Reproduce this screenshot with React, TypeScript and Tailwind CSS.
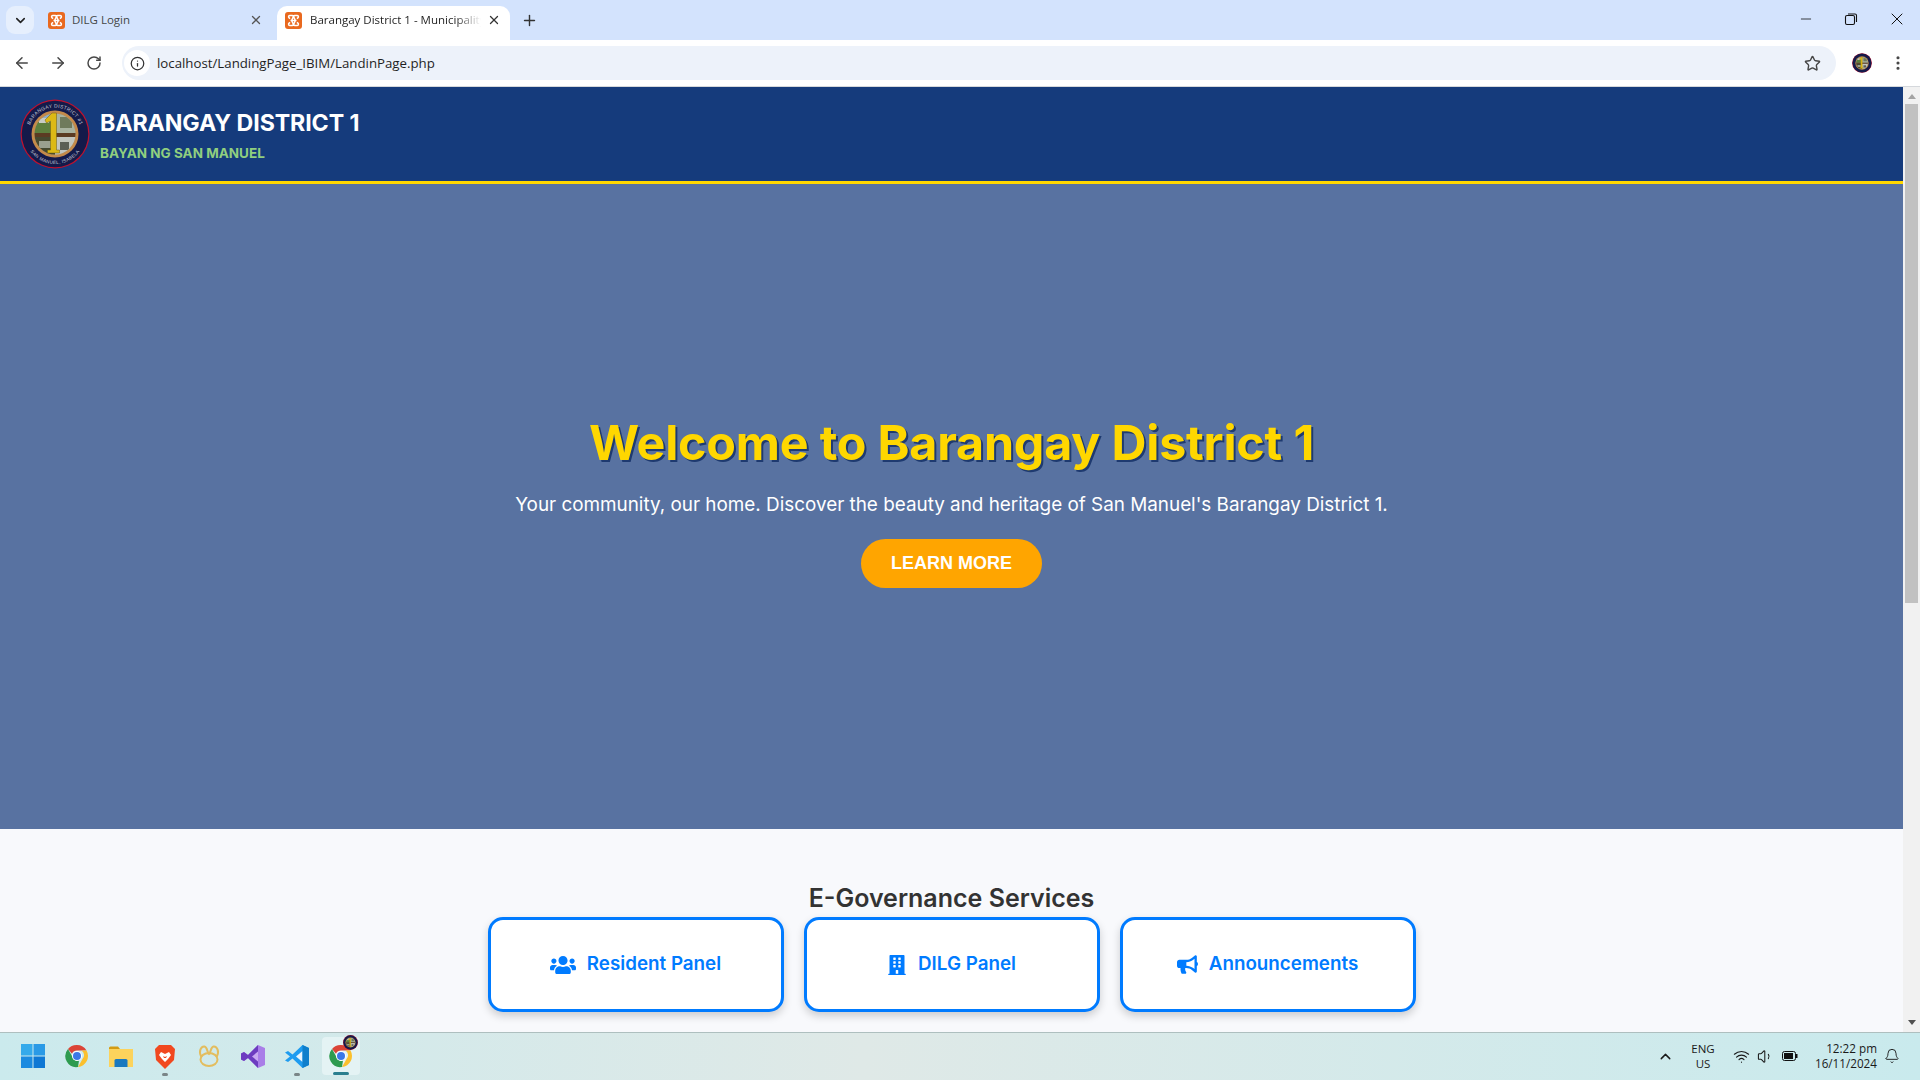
import React from "react";
import { ArrowLeft, ArrowRight, RotateCw, Info, Star, EllipsisVertical, ChevronDown, X, Plus, Minus, ChevronUp, Wifi, Volume1, Bell } from "lucide-react";
import { FaUsers, FaBuilding, FaBullhorn } from "react-icons/fa";

function Xampp() {
  return (
    <svg width="17" height="17" viewBox="0 0 17 17" className="shrink-0">
      <rect width="17" height="17" rx="3" fill="#e9691f" />
      <path d="M5 3.500h2.200c1 0 1.300 1 .9 1.800L6.600 8.500l1.500 3.200c.4.800.1 1.800-.9 1.800H5c-1.400 0-1.900-1.500-.9-2.300l1-.8M12 3.500H9.800c-1 0-1.300 1-.9 1.800l1.500 3.200-1.500 3.200c-.4.800-.1 1.800.9 1.800H12c1.400 0 1.900-1.500.9-2.300l-1-.8M5 3.500c-1.400 0-1.900 1.500-.9 2.300l1 .8M12 3.500c1.400 0 1.900 1.500.9 2.300l-1 .8M5.500 8.500h6" fill="none" stroke="#fff" strokeWidth="1.500" />
    </svg>
  );
}

function Crest({ size, text }: { size: number; text?: boolean }) {
  const clip = text ? "crestClipLarge" : size > 16 ? "crestClipMid" : "crestClipSmall";
  return (
    <svg width={size} height={size} viewBox="0 0 70 70" className="shrink-0">
      <circle cx="35" cy="35" r="34.500" fill="#c0112e" />
      <circle cx="35" cy="35" r="33.300" fill="#141a4a" />
      <defs>
        <clipPath id={clip}><circle cx="35" cy="35" r="20.500" /></clipPath>
        {text && <path id="crestTop" d="M9.400 41.900A26.500 26.500 0 1 1 60.600 41.900" />}
        {text && <path id="crestBot" d="M9 50A30 30 0 0 0 61 50" />}
      </defs>
      {text && (
        <>
          <text fill="#c8cbd8" fontSize="5" fontFamily="Liberation Sans, sans-serif" letterSpacing="0.300">
            <textPath href="#crestTop" startOffset="50%" textAnchor="middle">BARANGAY DISTRICT #1</textPath>
          </text>
          <text fill="#c8cbd8" fontSize="4.600" fontFamily="Liberation Sans, sans-serif" letterSpacing="0.300">
            <textPath href="#crestBot" startOffset="50%" textAnchor="middle">SAN MANUEL, ISABELA</textPath>
          </text>
        </>
      )}
      <circle cx="35" cy="35" r="23.500" fill="#c48a4a" />
      <g clipPath={`url(#${clip})`}>
        <rect x="14" y="14" width="42" height="42" fill="#8f9680" />
        <rect x="14" y="14" width="21" height="9" fill="#8fb0c8" />
        <rect x="14" y="23" width="21" height="11" fill="#5d7f3e" />
        <rect x="19" y="19" width="10" height="5" fill="#c8ccc4" />
        <rect x="35" y="14" width="21" height="20" fill="#a9b3a0" />
        <rect x="40" y="18" width="12" height="11" fill="#6f7a5c" />
        <rect x="14" y="34" width="42" height="4" fill="#5b3b22" />
        <rect x="14" y="38" width="21" height="18" fill="#46492f" />
        <rect x="19" y="42" width="12" height="7" fill="#9aa08f" />
        <rect x="35" y="38" width="21" height="18" fill="#c2c5bd" />
        <rect x="40" y="43" width="9" height="8" fill="#5c5f55" />
      </g>
      <path d="M25 21l7-7h4.500v37h3v3H27.500v-3h3V22l-4 2z" fill="#dcb915" stroke="#6b5a10" strokeWidth="0.500" />
    </svg>
  );
}

function Chrome({ size = 24 }: { size?: number }) {
  return (
    <svg width={size} height={size} viewBox="0 0 48 48">
      <path d="M24 2a22 22 0 0 1 19 11H24a11 11 0 0 0-10 6.500L6 10A22 22 0 0 1 24 2z" fill="#db4437" />
      <path d="M43 13a22 22 0 0 1-17 33l9-16a11 11 0 0 0-2-17z" fill="#fbc02d" />
      <path d="M26 46A22 22 0 0 1 6 10l9 16a11 11 0 0 0 13 7z" fill="#2e9b4f" />
      <circle cx="24" cy="24" r="10" fill="#fff" />
      <circle cx="24" cy="24" r="8" fill="#3b78e7" />
    </svg>
  );
}

function Tab({ title, active }: { title: string; active?: boolean }) {
  return (
    <div className={active ? "relative flex h-[34px] w-[233px] items-center rounded-t-[10px] bg-white pb-[6px] pl-[8px] pr-[9px]" : "flex h-[34px] w-[232px] items-center pb-[6px] pl-[10px] pr-[7px]"}>
      <Xampp />
      <span className={active ? "ml-[8px] flex-1 overflow-hidden whitespace-nowrap text-[11.500px] text-[#1f1f1f] [mask-image:linear-gradient(to_right,black_85%,transparent)]" : "ml-[7px] flex-1 overflow-hidden whitespace-nowrap text-[11.500px] text-[#444746]"}>{title}</span>
      <X size={14} strokeWidth={2.200} className={active ? "ml-[6px] text-[#333]" : "ml-[6px] text-[#555]"} />
    </div>
  );
}

function Card({ icon, label }: { icon: React.ReactNode; label: string }) {
  return (
    <div className="flex h-[95px] w-[296px] items-center justify-center gap-[11px] rounded-[15px] border-[3px] border-[#007bff] bg-white text-[#007bff] shadow-[0_4px_8px_rgba(0,0,0,0.18)]">
      {icon}
      <span className="text-[18.800px] font-semibold leading-none">{label}</span>
    </div>
  );
}

function TaskItem({ children, pill, active }: { children: React.ReactNode; pill?: boolean; active?: boolean }) {
  return (
    <div className={active ? "relative mx-[3px] flex h-[38px] w-[38px] items-center justify-center rounded-[4px] bg-[#e4f3f4]" : "relative flex h-[38px] w-[44px] items-center justify-center"}>
      {children}
      {pill && <div className="absolute bottom-[-1px] left-1/2 h-[3px] w-[6px] -translate-x-1/2 rounded-full bg-[#7a8587]" />}
      {active && <div className="absolute bottom-[0px] left-1/2 h-[3px] w-[16px] -translate-x-1/2 rounded-full bg-[#2a7f8f]" />}
    </div>
  );
}

export default function App() {
  return (
    <div className="flex h-[1080px] w-[1920px] flex-col overflow-hidden font-['Open_Sans',sans-serif]">
      {/* tab strip */}
      <div className="flex h-[40px] shrink-0 items-end bg-[#d3e3fd] pl-[6px]">
        <div className="mb-[6px] flex h-[28px] w-[28px] items-center justify-center rounded-[9px] bg-[#e6effd]">
          <ChevronDown size={15} strokeWidth={2.500} className="text-[#222]" />
        </div>
        <div className="ml-[4px]"><Tab title="DILG Login" /></div>
        <div className="ml-[7px]"><Tab title="Barangay District 1 - Municipality of San Manuel" active /></div>
        <Plus size={17} strokeWidth={2} className="mb-[11px] ml-[11px] text-[#333]" />
        <div className="flex-1" />
        <div className="mb-[11px] flex items-center pr-[13px] text-[#111]">
          <Minus size={16} strokeWidth={1.200} />
          <svg width="16" height="16" viewBox="0 0 16 16" fill="none" stroke="#111" strokeWidth="1.100" className="ml-[29px]"><rect x="2.500" y="4.500" width="9" height="9" rx="1.500" /><path d="M5 3h7a1.500 1.500 0 0 1 1.500 1.500V11" /></svg>
          <X size={20} strokeWidth={1.200} className="ml-[28px]" />
        </div>
      </div>

      {/* toolbar */}
      <div className="flex h-[47px] shrink-0 items-center rounded-t-[8px] border-b border-[#d5d8dc] bg-white">
        <div className="ml-[13px] flex w-[100px] items-center gap-[18px] text-[#474747]">
          <ArrowLeft size={18} strokeWidth={2} />
          <ArrowRight size={18} strokeWidth={2} />
          <RotateCw size={16} strokeWidth={2.200} className="ml-[1px]" />
        </div>
        <div className="ml-[9px] flex h-[34px] w-[1714px] items-center rounded-full bg-[#edf2fa] pl-[2px] pr-[15px]">
          <div className="flex h-[26px] w-[26px] items-center justify-center rounded-full bg-white">
            <Info size={15} strokeWidth={2} className="text-[#333]" />
          </div>
          <span className="ml-[7px] flex-1 pt-[1px] text-[13.250px] text-[#1f1f1f]">localhost/LandingPage_IBIM/LandinPage.php</span>
          <Star size={17} strokeWidth={2} className="text-[#474747]" />
        </div>
        <div className="ml-[16px]"><Crest size={20} /></div>
        <EllipsisVertical size={18} strokeWidth={2.200} className="ml-[17px] text-[#474747]" />
      </div>

      {/* viewport */}
      <div className="flex min-h-0 flex-1">
        <div className="flex-1 overflow-hidden bg-[#f8f9fc] font-['Inter',sans-serif]">
          <header className="flex h-[97px] items-center border-b-[3px] border-[#ffd700] bg-[#153b7c] pl-[20px]">
            <Crest size={70} text />
            <div className="ml-[10px] flex flex-col pt-[2px]">
              <h1 className="text-[23.200px] font-bold leading-[32px] tracking-[-0.1px] text-white">BARANGAY DISTRICT 1</h1>
              <p className="mt-[3px] text-[13.500px] font-bold leading-[22px] text-[#90cf7f]">BAYAN NG SAN MANUEL</p>
            </div>
          </header>
          <section className="flex h-[645px] flex-col items-center bg-[#5872a1] pt-[223px]">
            <h2 className="h-[72px] text-[48.400px] font-bold leading-[72px] tracking-[-0.2px] text-[#ffd700] [text-shadow:2px_2px_0_#1e3a70]">Welcome to Barangay District 1</h2>
            <p className="mt-[12px] h-[27px] text-[18.870px] leading-[27px] text-white">Your community, our home. Discover the beauty and heritage of San Manuel's Barangay District 1.</p>
            <div className="mt-[21px] flex h-[49px] w-[181px] items-center justify-center rounded-full bg-[#ffa500] font-['Liberation_Sans',sans-serif] text-[18px] font-bold text-white">LEARN MORE</div>
          </section>
          <section className="flex flex-col items-center pt-[50px]">
            <h2 className="h-[38px] text-[25px] font-semibold leading-[38px] text-[#333]">E-Governance Services</h2>
            <div className="flex gap-[20px]">
              <Card icon={<FaUsers size={26} />} label="Resident Panel" />
              <Card icon={<FaBuilding size={20} />} label="DILG Panel" />
              <Card icon={<FaBullhorn size={21} />} label="Announcements" />
            </div>
          </section>
        </div>
        <div className="flex w-[17px] flex-col items-center bg-[#f1f1f1]">
          <div className="mt-[7px] h-0 w-0 border-x-[4px] border-b-[5px] border-x-transparent border-b-[#a3a3a3]" />
          <div className="mt-[5px] h-[499px] w-[13px] bg-[#c1c1c1]" />
          <div className="flex-1" />
          <div className="mb-[7px] h-0 w-0 border-x-[4px] border-t-[5px] border-x-transparent border-t-[#505050]" />
        </div>
      </div>

      {/* taskbar */}
      <div className="flex h-[48px] shrink-0 items-center border-t border-[#aebfbf] bg-[linear-gradient(90deg,#cbeaed,#dfe9e7_45%,#c9eaed)] pb-[1px] pl-[11px]">
        <TaskItem>
          <svg width="24" height="24" viewBox="0 0 24 24"><path d="M0 0h11.500v11.500H0z" fill="#35aaeb" /><path d="M12.500 0H24v11.500H12.500z" fill="#2a9ae6" /><path d="M0 12.500h11.500V24H0z" fill="#1c8be0" /><path d="M12.500 12.500H24V24H12.500z" fill="#0f78d4" /></svg>
        </TaskItem>
        <TaskItem><Chrome /></TaskItem>
        <TaskItem>
          <svg width="24" height="24" viewBox="0 0 24 24"><path d="M0 4a1.500 1.500 0 0 1 1.500-1.500H9l2 2.500H0z" fill="#d39b13" /><path d="M0 5h24v18H0z" fill="#fcd35c" /><path d="M7 15h10a1.500 1.500 0 0 1 1.500 1.500V23H5.500v-6.500A1.500 1.500 0 0 1 7 15z" fill="#1a79bf" /></svg>
        </TaskItem>
        <TaskItem pill>
          <svg width="22" height="25" viewBox="0 0 22 25"><path d="M5 1h12l4 4-1 11-9 9-9-9L1 5z" fill="#f1481f" /><path d="M7 8l4 2 4-2 2 3-3 4-3 3-3-3-3-4z" fill="#fff" /><path d="M9 12l2 1 2-1-1 2h-2z" fill="#f1481f" /></svg>
        </TaskItem>
        <TaskItem>
          <svg width="24" height="24" viewBox="0 0 24 24" fill="none" stroke="#e3bd5f" strokeWidth="2"><ellipse cx="12" cy="15.500" rx="8.500" ry="6.500" /><path d="M4.500 13C1 8 4 2 7.500 2.500c3 .5 2.500 6 4.500 7.500 2-1.500 1.500-7 4.500-7.500C20 2 23 8 19.500 13" /></svg>
        </TaskItem>
        <TaskItem>
          <svg width="24" height="25" viewBox="0 0 24 25"><path d="M17 1l7 3v17l-7 3L7 14l-4 3-3-1.500v-6L3 8l4 3z" fill="#a97ee8" /><path d="M17 1v23L7 14l-4 3-3-1.500v-6L3 8l4 3z" fill="#6d3cc0" /><path d="M17 7.500v10l-6-5z" fill="#c9a9f2" /></svg>
        </TaskItem>
        <TaskItem pill>
          <svg width="24" height="25" viewBox="0 0 24 25"><path d="M17.500 1L24 4v17l-6.500 3-10-9.500L3 18l-3-1.500 5-4-5-4L3 7l4.500 3.500z" fill="#1f9cf0" /><path d="M17.500 7L11 12.500l6.500 5.500z" fill="#fff" fillOpacity="0.900" /><path d="M17.500 1L24 4v17l-6.500 3z" fill="#0f7fcc" /></svg>
        </TaskItem>
        <TaskItem active>
          <Chrome />
          <div className="absolute right-[2px] top-[-2px]"><Crest size={15} /></div>
        </TaskItem>
        <div className="flex-1" />
        <div className="flex items-center text-[#1a1a1a]">
          <ChevronUp size={17} strokeWidth={2} />
          <div className="ml-[10px] flex w-[38px] flex-col items-center text-[11.500px] leading-[15px]"><span>ENG</span><span>US</span></div>
          <Wifi size={17} strokeWidth={1.600} className="ml-[11px]" />
          <Volume1 size={17} strokeWidth={1.500} className="ml-[7px]" />
          <svg width="16" height="10" viewBox="0 0 16 10" className="ml-[8px]"><rect x="0.500" y="0.500" width="13" height="9" rx="2" fill="none" stroke="#111" /><rect x="2" y="2" width="9" height="6" fill="#111" /><rect x="14" y="3" width="1.500" height="4" fill="#111" /></svg>
          <div className="ml-[9px] flex w-[70px] flex-col items-end text-[11.700px] leading-[15px]"><span>12:22 pm</span><span>16/11/2024</span></div>
          <Bell size={16} strokeWidth={1.400} className="ml-[7px] mr-[20px]" />
        </div>
      </div>
    </div>
  );
}
